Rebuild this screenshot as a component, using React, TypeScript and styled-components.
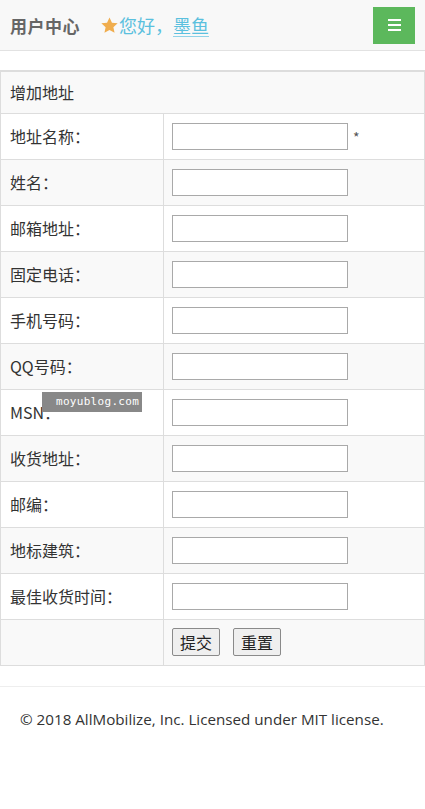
import React from "react";
import styled, { createGlobalStyle } from "styled-components";

const Global = createGlobalStyle`
  html, body { margin: 0; padding: 0; background: #fff; }
  body { font-family: "Noto Sans CJK SC", "Open Sans", sans-serif; color: #333; }
  * { box-sizing: border-box; }
`;

const Header = styled.header`
  height: 51px;
  background: #f8f8f8;
  border-bottom: 1px solid #e2e2e2;
  display: flex;
  align-items: center;
  padding: 0 10px;
`;

const Brand = styled.div`
  font-size: 17px;
  font-weight: 700;
  color: #666;
  letter-spacing: 0.5px;
`;

const Greeting = styled.div`
  margin-left: 20px;
  display: flex;
  align-items: center;
  font-size: 18px;
  color: #5bc0de;
`;

const Star = styled.svg`
  width: 19px;
  height: 19px;
  margin-top: 1px;
`;

const Name = styled.span`
  text-decoration: underline;
  text-underline-offset: 3px;
  text-decoration-thickness: 1px;
  text-decoration-color: #8fd3e8;
`;

const MenuButton = styled.button`
  margin-left: auto;
  width: 42px;
  height: 37px;
  background: #5cb85c;
  border: none;
  display: flex;
  flex-direction: column;
  align-items: center;
  justify-content: center;
  gap: 3px;
  padding: 0;
`;

const Bar = styled.span`
  display: block;
  width: 13px;
  height: 2px;
  background: #fff;
`;

const Main = styled.main`
  padding-top: 19px;
  position: relative;
`;

const Table = styled.table`
  width: 100%;
  border-collapse: collapse;
  border: 1px solid #ddd;
  font-size: 16px;
`;

const Row = styled.tr<{ $striped?: boolean }>`
  background: ${(p) => (p.$striped ? "#f9f9f9" : "#fff")};
`;

const Caption = styled.td`
  height: 42px;
  padding: 0 9px;
  border: 1px solid #ddd;
  border-top-width: 2px;
  background: #f9f9f9;
`;

const Label = styled.td`
  width: 163px;
  height: 46px;
  padding: 0 9px;
  border: 1px solid #ddd;
  vertical-align: middle;
`;

const Field = styled.td`
  height: 46px;
  padding: 0 8px;
  border: 1px solid #ddd;
  vertical-align: middle;
`;

const Input = styled.input`
  width: 176px;
  height: 27px;
  border: 1px solid #a9a9a9;
  padding: 0 4px;
  vertical-align: middle;
  font-size: 14px;
  background: #fff;
`;

const Required = styled.span`
  margin-left: 5px;
  font-size: 14px;
  color: #555;
  vertical-align: middle;
`;

const Btn = styled.button`
  height: 28px;
  padding: 0 7px;
  font-family: "Noto Sans CJK SC", sans-serif;
  font-size: 16px;
  color: #222;
  background: #efefef;
  border: 1px solid #8a8a8a;
  border-radius: 2px;
  margin-right: 13px;
  vertical-align: middle;
  line-height: 1;
`;

const Watermark = styled.div`
  position: absolute;
  left: 42px;
  top: 341px;
  width: 100px;
  height: 20px;
  background: #888;
  color: #fff;
  font-family: "DejaVu Sans Mono", monospace;
  font-size: 11px;
  line-height: 20px;
  padding-left: 14px;
  letter-spacing: 0.3px;
`;

const Footer = styled.footer`
  margin-top: 20px;
  border-top: 1px solid #eee;
  padding: 22px 20px;
  font-family: "Open Sans", sans-serif;
  font-size: 15.2px;
  color: #333;
`;

const fields = [
  "地址名称：",
  "姓名：",
  "邮箱地址：",
  "固定电话：",
  "手机号码：",
  "QQ号码：",
  "MSN：",
  "收货地址：",
  "邮编：",
  "地标建筑：",
  "最佳收货时间：",
];

export default function App() {
  return (
    <>
      <Global />
      <Header>
        <Brand>用户中心</Brand>
        <Greeting>
          <Star viewBox="0 0 24 24">
            <path
              d="M12 1.8l3.1 6.6 7.2.8-5.4 5 1.5 7.1L12 17.7l-6.4 3.6 1.5-7.1-5.4-5 7.2-.8z"
              fill="#f0ad4e"
            />
          </Star>
          <span>您好，</span>
          <Name>墨鱼</Name>
        </Greeting>
        <MenuButton aria-label="menu">
          <Bar />
          <Bar />
          <Bar />
        </MenuButton>
      </Header>
      <Main>
        <Table>
          <tbody>
            <tr>
              <Caption colSpan={2}>增加地址</Caption>
            </tr>
            {fields.map((f, i) => (
              <Row key={f} $striped={i % 2 === 1}>
                <Label>{f}</Label>
                <Field>
                  <Input type="text" />
                  {i === 0 && <Required>*</Required>}
                </Field>
              </Row>
            ))}
            <Row $striped>
              <Label />
              <Field>
                <Btn>提交</Btn>
                <Btn>重置</Btn>
              </Field>
            </Row>
          </tbody>
        </Table>
        <Watermark>moyublog.com</Watermark>
      </Main>
      <Footer>© 2018 AllMobilize, Inc. Licensed under MIT license.</Footer>
    </>
  );
}
